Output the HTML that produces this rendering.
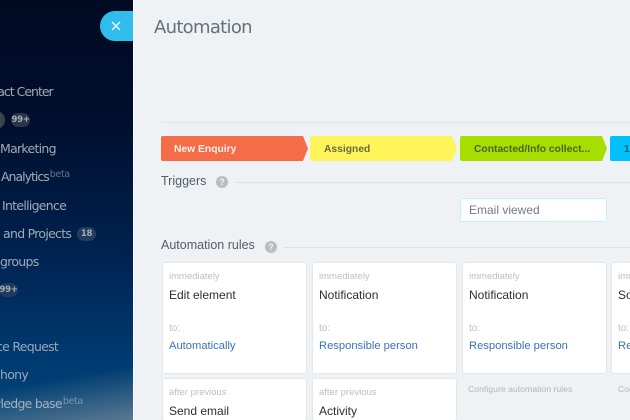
<!DOCTYPE html>
<html><head><meta charset="utf-8">
<style>
html,body{margin:0;padding:0;width:630px;height:420px;overflow:hidden;background:#eef2f4}
body{font-family:"Liberation Sans",sans-serif}
div,span,a{position:absolute;white-space:nowrap;display:block}
#root{left:0;top:0;width:630px;height:420px;overflow:hidden;background:#eef2f4}
#side{left:0;top:0;width:133px;height:420px;overflow:hidden;background:linear-gradient(180deg,#000a22 0%,#000f2e 30%,#002250 60%,#003a70 85%,#004478 100%)}
#glow{left:0;top:368px;width:133px;height:52px;background:linear-gradient(170deg,rgba(125,140,156,0) 28%,rgba(125,140,156,.72) 100%)}
.n{font-family:"DejaVu Sans",sans-serif;font-size:12.5px;letter-spacing:-.72px;color:#a3aab3;line-height:16px;height:16px}
.n sup{font-size:9.5px;letter-spacing:-.35px;color:#5f7690;line-height:0;vertical-align:4px;margin-left:1px}
.b{font-family:"DejaVu Sans",sans-serif;font-weight:700;font-size:8.5px;letter-spacing:-.3px;color:#a9adb3;background:#2a3548;border-radius:7px;height:14px;line-height:14px;text-align:center}
#tog{left:100px;top:11px;width:33px;height:30px;background:#2fbdee;border-radius:15px 0 0 15px}
#main{left:133px;top:0;width:497px;height:420px;background:#eef2f4;box-shadow:inset 1px 0 0 #f8f9fa}
h1{position:absolute;margin:0;left:154px;top:16px;font:400 18px/24px "DejaVu Sans",sans-serif;letter-spacing:-.7px;color:#667079}
.st{top:136px;height:25px}
.st svg{position:absolute;left:0;top:0}
.st b{position:absolute;top:0;font:700 10.3px/27px "Liberation Sans",sans-serif;white-space:nowrap}
.h{font-size:12.5px;color:#535c69;line-height:16px}
.l{height:1px;background:#dfe3e6}
.q{width:12px;height:12px;border-radius:50%;background:#b8bdc2;color:#eef2f4;font:700 9px/12px "Liberation Sans",sans-serif;text-align:center}
.c{background:#fff;border-radius:2px;box-shadow:0 0 0 1px #e3e7ea}
.c span{left:6px}
.g{font-size:9.5px;line-height:12px;color:#b9bfc6;top:8px}
.t{font-size:12px;line-height:14px;color:#2a2f35;top:25px}
.o{font-size:10px;line-height:12px;color:#b9bfc6;top:60px}
.a{font-size:11.2px;line-height:14px;color:#3a72b8;top:76px}
.f{font-size:8.7px;line-height:12px;color:#b0b6bd;top:383px}
</style></head><body>
<div id="root">
<div id="side"><div id="glow"></div>
<span class="n" style="left:-28px;top:84px;letter-spacing:-1px">Contact Center</span>
<div style="left:-13px;top:111px;width:18px;height:18px;border-radius:50%;background:#3c4350"></div>
<span class="b" style="left:11px;top:113px;width:19px">99+</span>
<span class="n" style="left:0;top:141px">Marketing</span>
<span class="n" style="left:1px;top:169px;letter-spacing:-1px">Analytics<sup>beta</sup></span>
<span class="n" style="left:2px;top:198px">Intelligence</span>
<span class="n" style="left:-6px;top:226px">s and Projects</span>
<span class="b" style="left:77px;top:227px;width:19px;background:#233d5f">18</span>
<span class="n" style="left:0;top:254px">groups</span>
<span class="b" style="left:-1px;top:283px;width:19px;background:#1d3a5f">99+</span>
<span class="n" style="left:-4px;top:339px;color:#9aa8b6">ce Request</span>
<span class="n" style="left:0;top:367px;color:#9aa8b6">hony</span>
<span class="n" style="left:-9px;top:396px;color:#a6b2be">wledge base<sup style="color:#8293a6">beta</sup></span>
</div>
<div id="tog"><svg width="33" height="30" style="position:absolute;left:0;top:0"><path d="M12 11l8 8M20 11l-8 8" stroke="#e8f8fe" stroke-width="1.5" fill="none"/></svg></div>
<div id="main"></div>
<h1>Automation</h1>
<div class="l" style="left:161px;top:122px;width:469px"></div>

<div class="st" style="left:161px;width:148px"><svg width="148" height="25"><path d="M2 0H142L147 12.500L142 25H2Q0 25 0 23V2Q0 0 2 0Z" fill="#f56c49"/></svg><b style="left:13px;color:#fdf0ea">New Enquiry</b></div>
<div class="st" style="left:310px;width:148px"><svg width="148" height="25"><path d="M2 0H142L147 12.500L142 25H2Q0 25 0 23V2Q0 0 2 0Z" fill="#fff55a"/></svg><b style="left:14px;color:#6a6a3c">Assigned</b></div>
<div class="st" style="left:460px;width:148px"><svg width="148" height="25"><path d="M2 0H142L147 12.500L142 25H2Q0 25 0 23V2Q0 0 2 0Z" fill="#a6de00"/></svg><b style="left:14px;color:#4f6424">Contacted/Info collect...</b></div>
<div class="st" style="left:610px;width:30px"><svg width="30" height="25"><path d="M2 0H30V25H2Q0 25 0 23V2Q0 0 2 0Z" fill="#00c0fd"/></svg><b style="left:14px;color:#1c5a70">1st</b></div>

<span class="h" style="left:161px;top:173px">Triggers</span>
<div class="q" style="left:216px;top:176px">?</div>
<div class="l" style="left:235px;top:182px;width:395px"></div>
<div style="left:460px;top:198px;width:145px;height:22px;background:#fff;border:1px solid #c4f1fb;border-radius:2px"></div>
<span style="left:469px;top:203px;font-size:12px;line-height:14px;color:#737a86">Email viewed</span>

<span class="h" style="left:161px;top:237px">Automation rules</span>
<div class="q" style="left:265px;top:241px">?</div>
<div class="l" style="left:284px;top:247px;width:346px"></div>

<div class="c" style="left:163px;top:263px;width:143px;height:110px"><span class="g">immediately</span><span class="t">Edit element</span><span class="o">to:</span><span class="a">Automatically</span></div>
<div class="c" style="left:313px;top:263px;width:143px;height:110px"><span class="g">immediately</span><span class="t">Notification</span><span class="o">to:</span><span class="a">Responsible person</span></div>
<div class="c" style="left:463px;top:263px;width:143px;height:110px"><span class="g">immediately</span><span class="t">Notification</span><span class="o">to:</span><span class="a">Responsible person</span></div>
<div class="c" style="left:612px;top:263px;width:18px;height:110px;overflow:hidden;border-radius:2px 0 0 2px"><span class="g">immediately</span><span class="t">Sort</span><span class="o">to:</span><span class="a">Responsible</span></div>
<div class="c" style="left:163px;top:379px;width:143px;height:41px"><span class="g">after previous</span><span class="t">Send email</span></div>
<div class="c" style="left:313px;top:379px;width:143px;height:41px"><span class="g">after previous</span><span class="t">Activity</span></div>
<span class="f" style="left:468px">Configure automation rules</span>
<span class="f" style="left:618px">Configure</span>
</div>
</body></html>
